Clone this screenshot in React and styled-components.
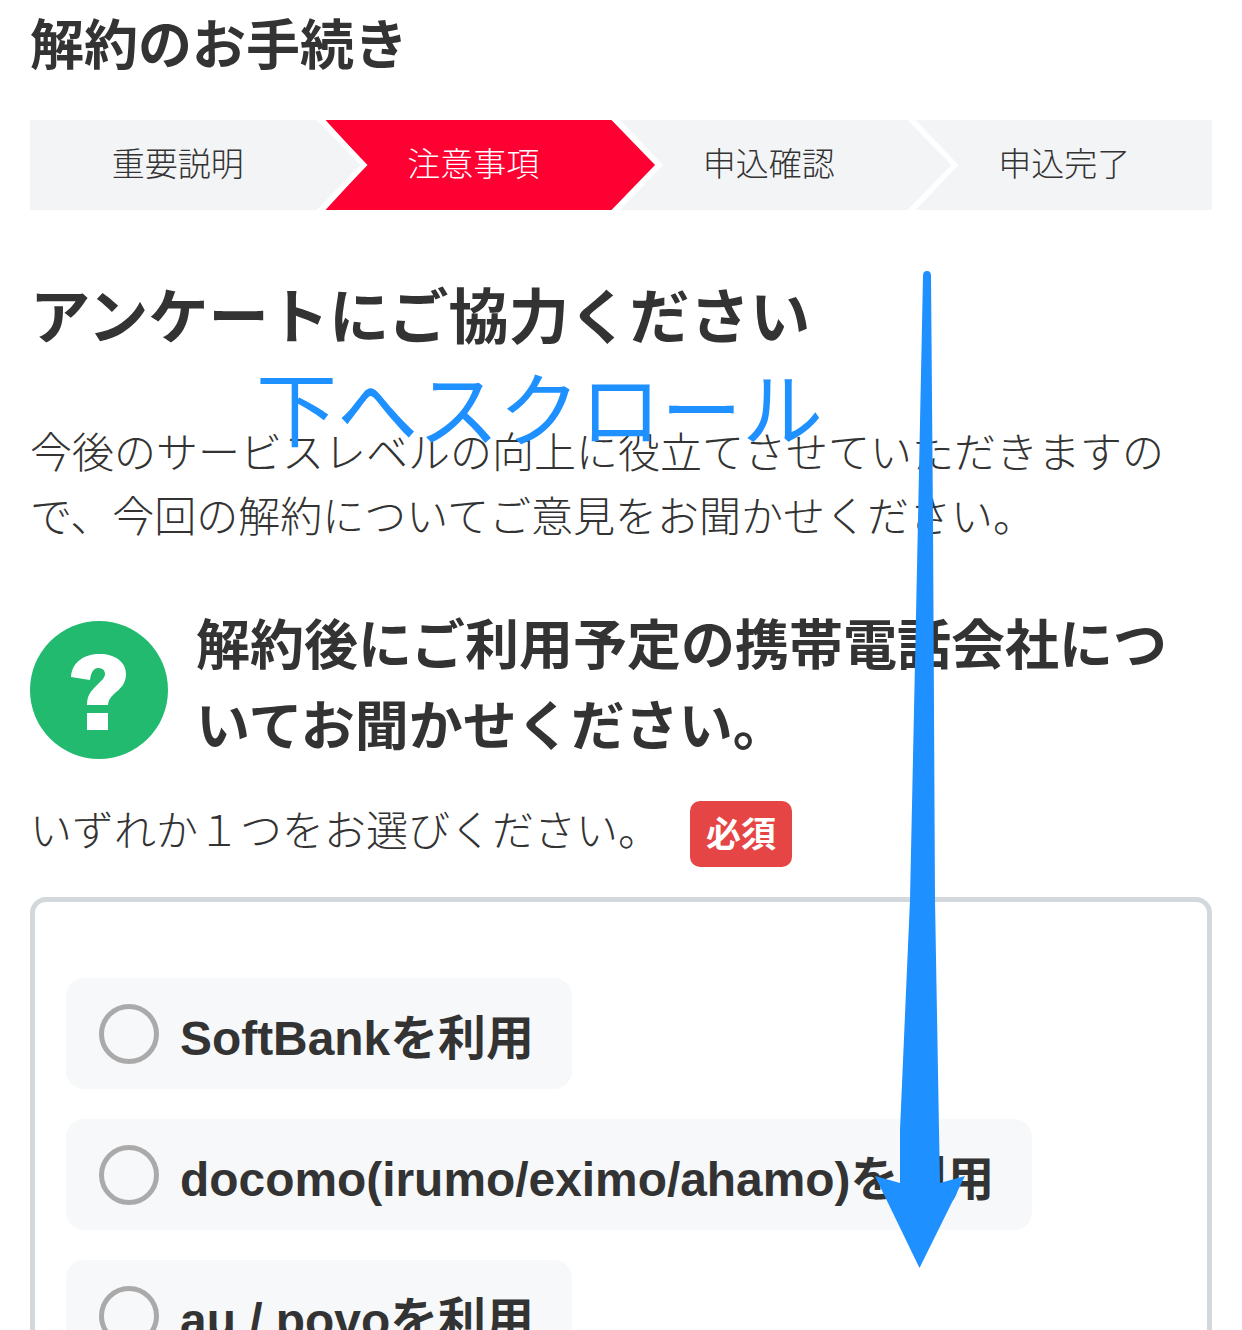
import React from "react";
import styled, { createGlobalStyle } from "styled-components";

const Global = createGlobalStyle`
  html, body { margin: 0; padding: 0; background: #fff; }
  body { font-family: "Noto Sans CJK JP", "Noto Sans", sans-serif; color: #333; }
  * { box-sizing: border-box; }
`;

const Page = styled.div`
  position: relative;
  width: 1242px;
  height: 1330px;
  padding: 0 30px;
  overflow: hidden;
`;

const Title = styled.h1`
  margin: -3px 0 0;
  font-size: 54px;
  font-weight: 700;
  line-height: 90px;
  color: #333;
  white-space: nowrap;
`;

const Steps = styled.ol`
  display: flex;
  margin: 33px 0 0;
  padding: 0;
  height: 90px;
  list-style: none;
  background: #f3f4f6;
`;

const Step = styled.li`
  position: relative;
  flex: 1;
  display: flex;
  align-items: center;
  justify-content: center;
  font-size: 33px;
  font-weight: 300;
  color: ${(p) => (p.$active ? "#fff" : "#333")};

  ${(p) =>
    p.$active &&
    `
    &::before {
      content: "";
      position: absolute;
      top: 0;
      bottom: 0;
      left: 0;
      right: -34px;
      background: #ff0033;
      clip-path: polygon(0 0, 286px 0, 329.5px 45px, 286px 90px, 0 90px, 41px 45px);
    }
  `}

  ${(p) =>
    !p.$last &&
    `
    &::after {
      content: "";
      position: absolute;
      z-index: 2;
      top: 0;
      bottom: 0;
      right: -42px;
      width: 51px;
      background: #fff;
      clip-path: polygon(0 0, 8px 0, 51px 45px, 8px 90px, 0 90px, 44px 45px);
    }
  `}
`;

const StepLabel = styled.span`
  position: relative;
  z-index: 1;
  margin-bottom: 6px;
`;

const Heading = styled.h2`
  margin: 58px 0 0;
  font-size: 60.3px;
  font-weight: 700;
  line-height: 90px;
  color: #333;
  white-space: nowrap;
`;

const Lead = styled.p`
  margin: 60px 0 0;
  font-size: 42px;
  font-weight: 300;
  line-height: 64px;
  color: #333;
`;

const Question = styled.div`
  display: flex;
  align-items: flex-start;
  gap: 28px;
  margin-top: 55px;
`;

const QuestionIcon = styled.svg`
  flex: none;
  width: 138px;
  height: 138px;
  margin-top: 20px;
`;

const QuestionText = styled.h3`
  margin: 0;
  font-size: 54px;
  font-weight: 700;
  line-height: 81px;
  color: #333;
`;

const Hint = styled.div`
  display: flex;
  align-items: flex-start;
  margin-top: 38px;
`;

const HintText = styled.span`
  width: 660px;
  font-size: 42px;
  font-weight: 300;
  line-height: 54px;
  color: #333;
  white-space: nowrap;
`;

const Badge = styled.span`
  display: flex;
  align-items: center;
  justify-content: center;
  width: 102px;
  height: 66px;
  padding-bottom: 6px;
  border-radius: 10px;
  background: #e64545;
  color: #fff;
  font-size: 35px;
  font-weight: 700;
`;

const Box = styled.div`
  display: flex;
  flex-direction: column;
  align-items: flex-start;
  gap: 30px;
  margin-top: 30px;
  height: 600px;
  padding: 76px 31px 0;
  border: 5px solid #d3d8dc;
  border-radius: 16px;
`;

const Option = styled.label`
  display: inline-flex;
  align-items: center;
  gap: 21px;
  height: 111px;
  padding: 0 38px 0 33px;
  border-radius: 18px;
  background: #f7f8fa;
  flex: none;
`;

const Radio = styled.span`
  flex: none;
  width: 60px;
  height: 60px;
  border: 5px solid #aaaaaa;
  border-radius: 50%;
  background: #f7f8fa;
`;

const OptionText = styled.span`
  font-family: "Liberation Sans", "Noto Sans CJK JP", sans-serif;
  font-size: 47.9px;
  font-weight: 700;
  line-height: 60px;
  margin-top: 10px;
  color: #333;
  white-space: nowrap;
`;

const ScrollLabel = styled.div`
  position: absolute;
  left: 256px;
  top: 350px;
  font-size: 81px;
  line-height: 110px;
  font-weight: 400;
  color: #1e90ff;
  white-space: nowrap;
`;

const ArrowSvg = styled.svg`
  position: absolute;
  left: 0;
  top: 0;
  width: 1242px;
  height: 1330px;
  pointer-events: none;
`;

export default function App() {
  return (
    <Page>
      <Global />
      <Title>解約のお手続き</Title>
      <Steps>
        <Step><StepLabel>重要説明</StepLabel></Step>
        <Step $active><StepLabel>注意事項</StepLabel></Step>
        <Step><StepLabel>申込確認</StepLabel></Step>
        <Step $last><StepLabel>申込完了</StepLabel></Step>
      </Steps>
      <Heading>アンケートにご協力ください</Heading>
      <Lead>今後のサービスレベルの向上に役立てさせていただきますので、今回の解約についてご意見をお聞かせください。</Lead>
      <Question>
        <QuestionIcon viewBox="0 0 138 138">
          <circle cx="69" cy="69" r="69" fill="#21ba6f" />
          <path
            fill="#fff"
            d="M41 56 C42 41 54 33 70 33 C85 33 96 41 96 53 C96 63 90 68 84 73 C80 77 78 80 78 84 L57 84 C57 75 60 71 66 65 C71 60 75 57 75 53 C75 49 72 47 68 47 C64 47 61 51 60 59 Z"
          />
          <rect x="57" y="92" width="21" height="17" fill="#fff" />
        </QuestionIcon>
        <QuestionText>解約後にご利用予定の携帯電話会社についてお聞かせください。</QuestionText>
      </Question>
      <Hint>
        <HintText>いずれか１つをお選びください。</HintText>
        <Badge>必須</Badge>
      </Hint>
      <Box>
        <Option><Radio /><OptionText>SoftBankを利用</OptionText></Option>
        <Option><Radio /><OptionText>docomo(irumo/eximo/ahamo)を利用</OptionText></Option>
        <Option><Radio /><OptionText>au / povoを利用</OptionText></Option>
      </Box>
      <ScrollLabel>下へスクロール</ScrollLabel>
      <ArrowSvg viewBox="0 0 1242 1330">
        <path
          fill="#1e90ff"
          d="M923 276 Q923 271 927 271 Q931 271 931 276 L933 520 L935 900 L939 1130 L940 1183 L965 1176 L919.5 1268 L875 1176 L900 1183 L900 1130 L910 900 L918 520 Z"
        />
      </ArrowSvg>
    </Page>
  );
}
